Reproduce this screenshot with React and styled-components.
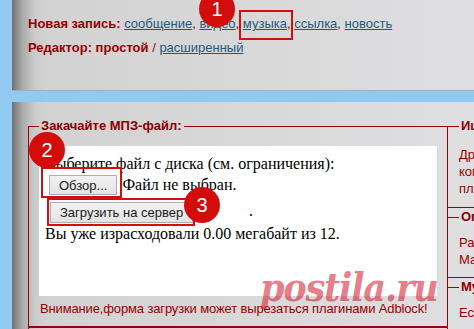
import React from "react";
import styled, { createGlobalStyle } from "styled-components";

const GlobalStyle = createGlobalStyle`
  html, body {
    margin: 0;
    padding: 0;
    background: #92c9f1;
    overflow: hidden;
  }
  body {
    font-family: "Liberation Sans", Arial, sans-serif;
    font-size: 13px;
  }
`;

//panels
const Page = styled.div`
  position: relative;
  width: 474px;
  height: 329px;
  padding-left: 12px;
  box-sizing: border-box;
  overflow: hidden;
`;

const Panel = styled.div`
  background: linear-gradient(
    to right,
    #707070 0px,
    #a9a9a9 10px,
    #cacaca 22px,
    #d2d2d2 34px,
    #d8d8d9 50%,
    #dfdfe1 100%
  );
`;

const TopPanel = styled(Panel)`
  height: 91px;
  box-sizing: border-box;
  border-bottom: 1px solid #a8acb0;
  padding: 14px 0 0 16px;
`;

const Line = styled.div`
  line-height: 20px;
  white-space: nowrap;
  & + & {
    margin-top: 4px;
  }
`;

const Label = styled.b`
  color: #980000;
`;

const Sep = styled.span`
  color: #980000;
`;

const Link = styled.a`
  color: #1e5a7c;
  text-decoration: underline;
  cursor: pointer;
`;

const UploadPanel = styled(Panel)`
  margin-top: 11px;
  height: 240px;
  padding: 15px 0 0 16px;
  display: flex;
  align-items: flex-start;
`;

const MainColumn = styled.div`
  width: 420px;
  flex-shrink: 0;
`;

const Box = styled.fieldset`
  margin: 0;
  min-width: 0;
  box-sizing: border-box;
  border: 1px solid #a20000;
  padding: ${(p) => p.$pad || "0 10px 9px"};
`;

const Legend = styled.legend`
  padding: 0 2px;
  font-weight: bold;
  font-size: 13px;
  line-height: 18px;
  color: #8c0000;
  white-space: nowrap;
`;

const WhiteArea = styled.div`
  background: #fff;
  height: 150px;
  box-sizing: border-box;
  margin-top: 11px;
  padding: 9px 6px 0;
  font-family: "Liberation Serif", "Times New Roman", serif;
  font-size: 16px;
  line-height: 18px;
  color: #000;
`;

const Row = styled.div`
  display: flex;
  align-items: center;
  gap: 5px;
  margin-top: ${(p) => p.$top || 0}px;
  padding-left: ${(p) => p.$indent || 0}px;
  white-space: nowrap;
`;

const Button = styled.button`
  height: ${(p) => p.$h || 20}px;
  padding: 0 9px;
  margin: 0;
  border: 1px solid #adadad;
  border-radius: 0;
  background: linear-gradient(#f2f2f2, #e3e3e3);
  font-family: "Liberation Sans", Arial, sans-serif;
  font-size: 13px;
  color: #1a1a1a;
  line-height: 1;
`;

const Note = styled.div`
  margin-top: 4px;
  padding-left: 1px;
  line-height: 17px;
  letter-spacing: -0.14px;
  color: #9a0000;
  white-space: nowrap;
`;

const NextBox = styled(Box)`
  height: 20px;
`;

//sidebar
const Sidebar = styled.div`
  margin-left: -1px;
  width: 200px;
  flex-shrink: 0;
  display: flex;
  flex-direction: column;
`;

const SideText = styled.div`
  color: #9a0000;
  line-height: 17px;
  white-space: nowrap;
`;

//annotations drawn over the screenshot
const Circle = styled.div`
  position: absolute;
  left: ${(p) => p.$x - 18}px;
  top: ${(p) => p.$y - 18}px;
  width: 36px;
  height: 36px;
  border-radius: 50%;
  background: #d30c0c;
  color: #fff;
  font-size: 20px;
  display: flex;
  align-items: center;
  justify-content: center;
  z-index: 3;
`;

const Frame = styled.div`
  position: absolute;
  left: ${(p) => p.$x}px;
  top: ${(p) => p.$y}px;
  width: ${(p) => p.$w}px;
  height: ${(p) => p.$h}px;
  box-sizing: border-box;
  border: 2px solid #d10f0f;
  z-index: 2;
`;

const Dot = styled.div`
  position: absolute;
  left: 250px;
  top: 214px;
  width: 2px;
  height: 2px;
  background: #d10f0f;
`;

const Watermark = styled.div`
  position: absolute;
  left: 260px;
  top: 264px;
  font-family: "DejaVu Serif Condensed", "DejaVu Serif", serif;
  font-stretch: condensed;
  font-style: italic;
  font-weight: bold;
  font-size: 39px;
  line-height: 46px;
  color: rgba(212, 28, 48, 0.58);
  letter-spacing: -1.2px;
  z-index: 4;
  pointer-events: none;
`;

const App = () => {
  return (
    <>
      <GlobalStyle />
      <Page>
        <TopPanel>
          <Line>
            <Label>Новая запись:</Label> <Link>сообщение</Link>
            <Sep>,</Sep> <Link>видео</Link>
            <Sep>,</Sep> <Link>музыка</Link>
            <Sep>,</Sep> <Link>ссылка</Link>
            <Sep>,</Sep> <Link>новость</Link>
          </Line>
          <Line>
            <Label>Редактор: простой</Label> <Sep>/</Sep>{" "}
            <Link>расширенный</Link>
          </Line>
        </TopPanel>

        <UploadPanel>
          <MainColumn>
            <Box>
              <Legend>Закачайте МПЗ-файл:</Legend>
              <WhiteArea>
                <Row>Выберите файл с диска (см. ограничения):</Row>
                <Row $top={2} $indent={4}>
                  <Button>Обзор...</Button>
                  <span>Файл не выбран.</span>
                </Row>
                <Row $top={7} $indent={5}>
                  <Button $h={21}>Загрузить на сервер</Button>
                </Row>
                <Row $top={2}>Вы уже израсходовали 0.00 мегабайт из 12.</Row>
              </WhiteArea>
              <Note>Внимание,форма загрузки может вырезаться плагинами Adblock!</Note>
            </Box>
            <NextBox />
          </MainColumn>

          <Sidebar>
            <Box $pad="11px 0 10px 11px">
              <Legend>Ищете музыку?</Legend>
              <SideText>Друзья могут</SideText>
              <SideText>комментировать</SideText>
              <SideText>плеер</SideText>
            </Box>
            <Box $pad="8px 0 9px 11px">
              <Legend>Ограничения</Legend>
              <SideText>Размер файла</SideText>
              <SideText>Максимум</SideText>
            </Box>
            <Box $pad="8px 0 9px 11px">
              <Legend>Музыка</Legend>
              <SideText>Если файл</SideText>
            </Box>
          </Sidebar>
        </UploadPanel>

        <Frame $x={239} $y={10} $w={54} $h={30} />
        <Frame $x={41} $y={167} $w={81} $h={31} />
        <Frame $x={47} $y={198} $w={148} $h={28} />
        <Dot />
        <Circle $x={217} $y={9}>1</Circle>
        <Circle $x={47} $y={150}>2</Circle>
        <Circle $x={202} $y={205}>3</Circle>
        <Watermark>postila.ru</Watermark>
      </Page>
    </>
  );
};

export default App;
